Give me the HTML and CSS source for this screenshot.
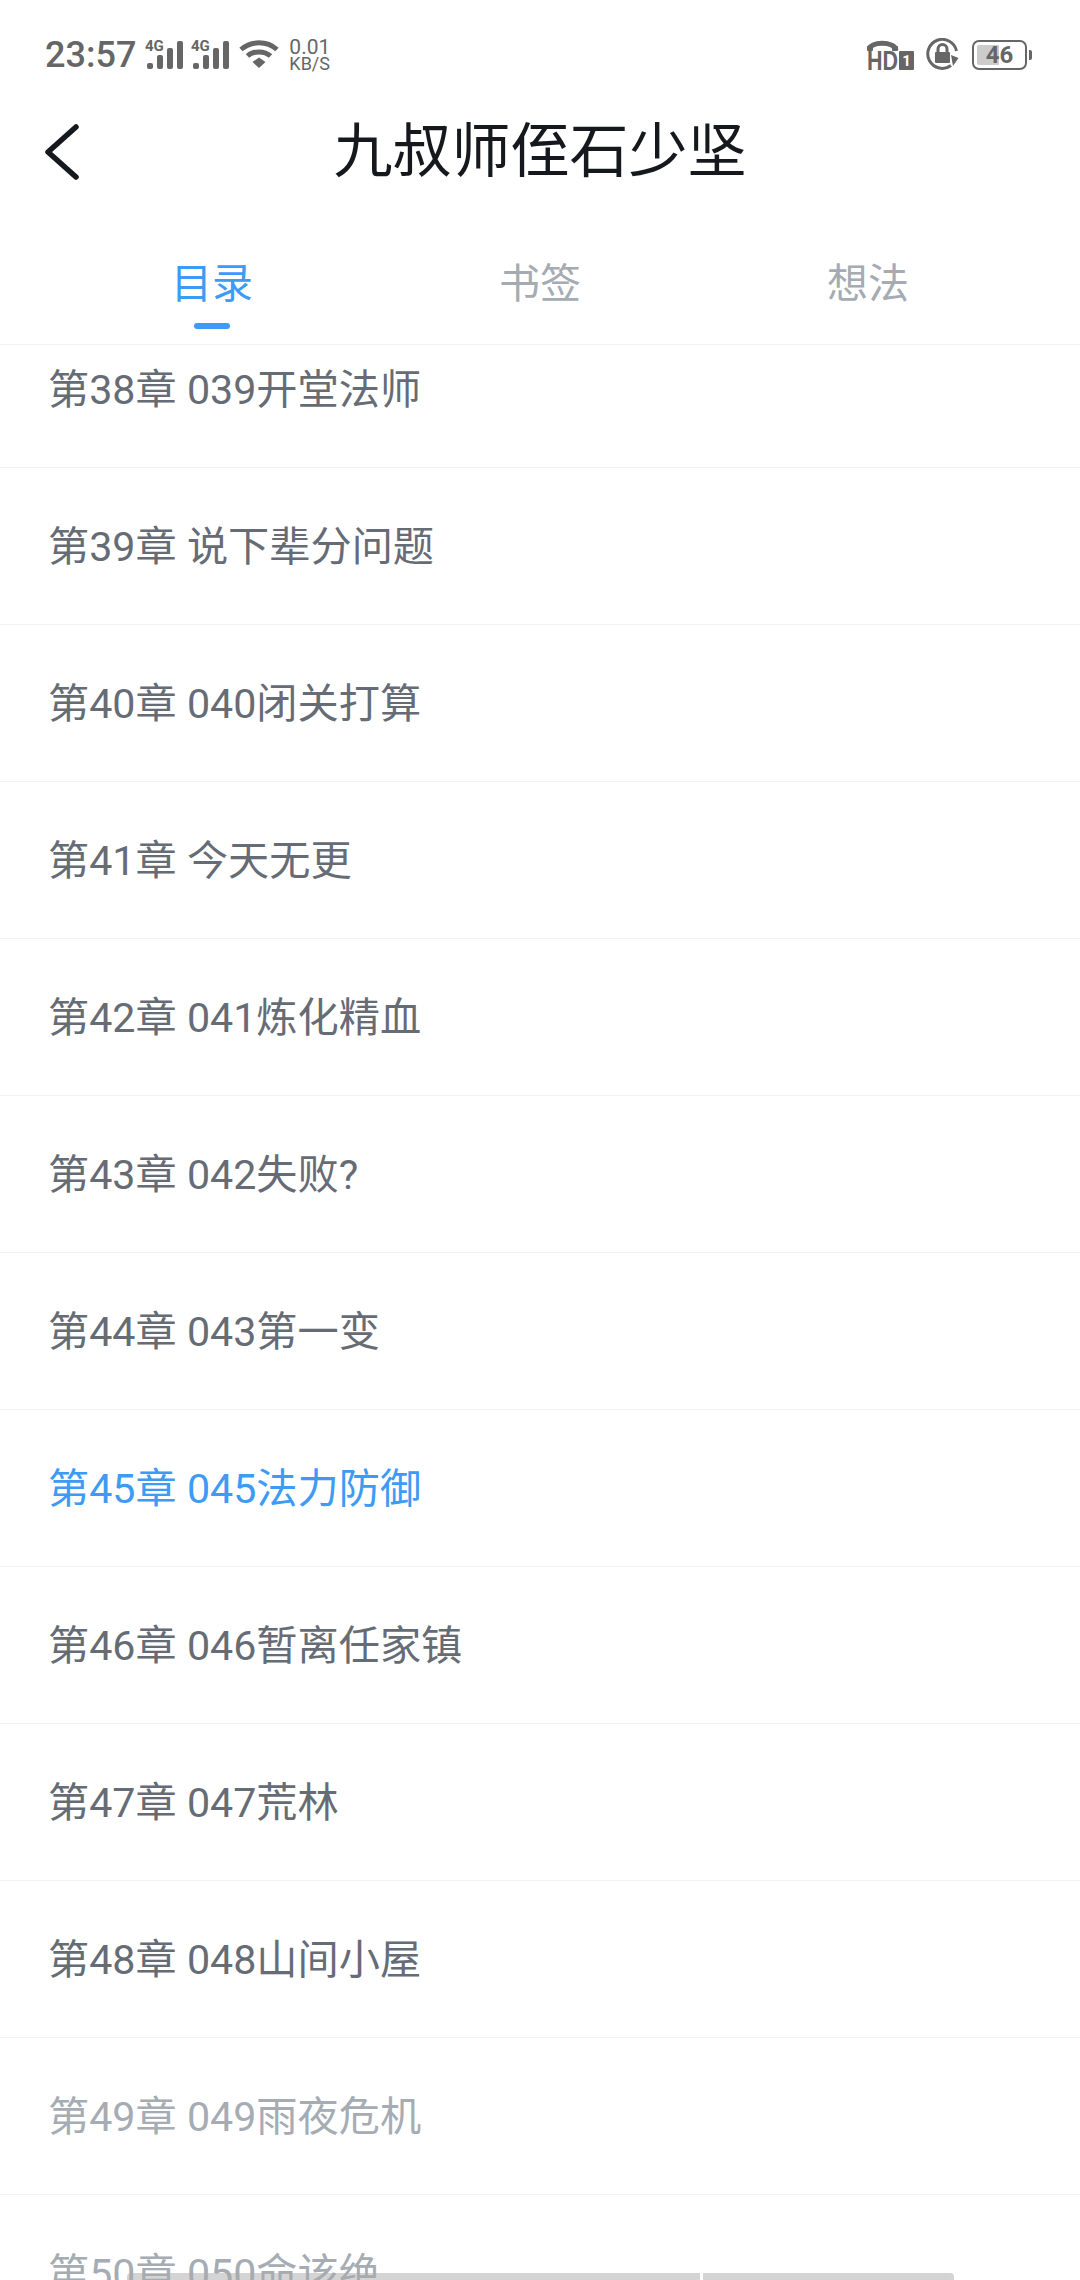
FILE: index.html
```html
<!DOCTYPE html>
<html>

<head>
    <meta charset="utf-8">
    <link rel="stylesheet" href="styles.css">
</head>

<body>
    <div class="page">
        <div class="statusbar">
            <div class="status-left">
                <span class="time">23:57</span>
                <svg class="signal" width="38" height="34" viewBox="0 -4 38 34">
                    <text class="signal-label" x="0" y="11">4G</text>
                    <rect x="2" y="23" width="6" height="6" rx="2" />
                    <rect x="12" y="15" width="6" height="14" rx="2" />
                    <rect x="22" y="8" width="6" height="21" rx="2" />
                    <rect x="32" y="1" width="6" height="28" rx="2" />
                </svg>
                <svg class="signal" width="38" height="34" viewBox="0 -4 38 34">
                    <text class="signal-label" x="0" y="11">4G</text>
                    <rect x="2" y="23" width="6" height="6" rx="2" />
                    <rect x="12" y="15" width="6" height="14" rx="2" />
                    <rect x="22" y="8" width="6" height="21" rx="2" />
                    <rect x="32" y="1" width="6" height="28" rx="2" />
                </svg>
                <svg class="wifi" width="40" height="30" viewBox="0 0 40 30">
                    <path d="M2 10.5 C12 1.5 28 1.5 38 10.5" />
                    <path d="M8.5 17 C14.5 11.5 25.5 11.5 31.5 17" />
                    <polygon class="wifi-dot" points="13.5,23 20,18.5 26.5,23 20,29" />
                </svg>
                <div class="speed">
                    <span class="speed-value">0.01</span>
                    <span class="speed-unit">KB/S</span>
                </div>
            </div>
            <div class="status-right">
                <svg class="hd" width="47" height="38" viewBox="0 0 47 38">
                    <path class="hd-phone" d="M2 11 C2 2 28 2 29 11" />
                    <rect x="0" y="7" width="6" height="5" rx="1" />
                    <rect x="25" y="7" width="6" height="5" rx="1" />
                    <text class="hd-label" x="0" y="31" textLength="31" lengthAdjust="spacingAndGlyphs">HD</text>
                    <rect x="32" y="12" width="15" height="19" rx="1" />
                    <text class="hd-sim" x="39.5" y="27">1</text>
                </svg>
                <svg class="rotate-lock" width="33" height="33" viewBox="0 0 33 33">
                    <path class="rotate-ring" d="M25 27.5 A14.5 14.5 0 1 1 30.5 13" />
                    <polygon points="25,17 32.5,20 27,28" />
                    <rect x="9" y="14" width="15" height="11" rx="1" />
                    <path class="rotate-ring thin" d="M12 14 V11 A4.5 4.5 0 0 1 21 11 V14" />
                </svg>
                <div class="battery">
                    <div class="battery-body">
                        <div class="battery-fill"></div>
                        <span class="battery-text">46</span>
                    </div>
                    <div class="battery-nub"></div>
                </div>
            </div>
        </div>

        <div class="navbar">
            <svg class="back" width="35" height="56" viewBox="0 0 35 56">
                <path d="M32 3 L4 28 L32 53" />
            </svg>
            <h1 class="title">九叔师侄石少坚</h1>
        </div>

        <div class="tabs">
            <div class="tab active">目录<span class="tab-line"></span></div>
            <div class="tab">书签</div>
            <div class="tab">想法</div>
        </div>

        <div class="chapters">
            <ul class="chapter-list">
                <li class="chapter">第38章 039开堂法师</li>
                <li class="chapter">第39章 说下辈分问题</li>
                <li class="chapter">第40章 040闭关打算</li>
                <li class="chapter">第41章 今天无更</li>
                <li class="chapter">第42章 041炼化精血</li>
                <li class="chapter">第43章 042失败?</li>
                <li class="chapter">第44章 043第一变</li>
                <li class="chapter current">第45章 045法力防御</li>
                <li class="chapter">第46章 046暂离任家镇</li>
                <li class="chapter">第47章 047荒林</li>
                <li class="chapter">第48章 048山间小屋</li>
                <li class="chapter locked">第49章 049雨夜危机</li>
                <li class="chapter locked">第50章 050命该绝</li>
            </ul>
        </div>

        <div class="gesture-bar">
            <div class="gesture-left"></div>
            <div class="gesture-right"></div>
        </div>
    </div>
</body>

</html>
```

FILE: styles.css
```css
* {
    margin: 0;
    padding: 0;
    box-sizing: border-box;
}

body {
    font-family: Roboto, "Noto Sans CJK SC", sans-serif;
    background: #fff;
}

.page {
    position: relative;
    width: 1080px;
    height: 2280px;
    overflow: hidden;
    display: flex;
    flex-direction: column;
}

/* status bar */
.statusbar {
    height: 72px;
    flex: none;
    padding: 0 48px 0 45px;
    display: flex;
    justify-content: space-between;
    align-items: flex-end;
    color: #666;
}

.status-left,
.status-right {
    display: flex;
    align-items: flex-end;
}

.time {
    font-size: 36px;
    font-weight: 500;
    line-height: 41px;
    margin: 0 9px -4px 0;
}

.signal {
    display: block;
    margin: 0 8px 2px 0;
    fill: #666;
}

.signal-label {
    font-family: Roboto, sans-serif;
    font-size: 15px;
    font-weight: 700;
}

.wifi {
    display: block;
    margin: 0 10px 3px 2px;
}

.wifi path {
    fill: none;
    stroke: #666;
    stroke-width: 5px;
}

.wifi-dot {
    fill: #666;
}

.speed {
    display: flex;
    flex-direction: column;
    font-size: 21px;
    line-height: 18px;
    width: 44px;
}

.speed-unit {
    font-size: 18px;
    line-height: 16px;
}

.status-right {
    gap: 12px;
}

.hd {
    display: block;
    margin-bottom: -5px;
    fill: #666;
}

.hd-phone {
    fill: none;
    stroke: #666;
    stroke-width: 5px;
}

.hd-label {
    font-family: "Liberation Sans", sans-serif;
    font-size: 28px;
    font-weight: 700;
}

.hd-sim {
    font-family: Roboto, sans-serif;
    font-size: 15px;
    font-weight: 700;
    fill: #fff;
    text-anchor: middle;
}

.rotate-lock {
    display: block;
    margin-bottom: 1px;
    fill: #666;
}

.rotate-ring {
    fill: none;
    stroke: #666;
    stroke-width: 3px;
}

.battery {
    display: flex;
    align-items: center;
    margin: 0 0 2px 1px;
}

.battery-body {
    position: relative;
    width: 55px;
    height: 30px;
    border: 2px solid #666;
    border-radius: 7px;
    display: flex;
    align-items: center;
    justify-content: center;
}

.battery-fill {
    position: absolute;
    left: 3px;
    top: 3px;
    bottom: 3px;
    width: 22px;
    background: #ccc;
    border-radius: 2px 0 0 2px;
}

.battery-text {
    position: relative;
    font-size: 24px;
    font-weight: 700;
    line-height: 26px;
    color: #666;
}

.battery-nub {
    width: 3px;
    height: 10px;
    margin-left: 2px;
    background: #666;
    border-radius: 0 2px 2px 0;
}

/* title */
.navbar {
    height: 160px;
    flex: none;
    padding-left: 44px;
    display: grid;
    grid-template-columns: 35px 1fr 79px;
    align-items: center;
}

.back {
    display: block;
    fill: none;
    stroke: #15191e;
    stroke-width: 5.5px;
    stroke-linecap: round;
    stroke-linejoin: round;
}

.title {
    font-size: 59px;
    font-weight: 400;
    line-height: 70px;
    color: #15191e;
    text-align: center;
}

/* tabs */
.tabs {
    height: 113px;
    flex: none;
    padding: 27px 48px 0;
    display: grid;
    grid-template-columns: repeat(3, 1fr);
    border-bottom: 1px solid #f0f1f2;
}

.tab {
    position: relative;
    font-size: 41px;
    line-height: 50px;
    text-align: center;
    color: #a5abb3;
}

.tab.active {
    color: #3d9bf5;
}

.tab-line {
    position: absolute;
    left: 50%;
    bottom: 15px;
    width: 36px;
    height: 6px;
    margin-left: -18px;
    background: #3d9bf5;
    border-radius: 3px;
}

/* chapters */
.chapters {
    flex: 1;
    overflow: hidden;
}

.chapter-list {
    list-style: none;
    margin-top: -34px;
}

.chapter {
    height: 157px;
    padding: 0 0 6px 48px;
    display: flex;
    align-items: center;
    font-size: 41.2px;
    color: #666c75;
    border-bottom: 1px solid #f2f3f4;
}

.chapter.current {
    color: #3d9bf5;
}

.chapter.locked {
    color: #a5acb4;
}

/* gesture bar over the list */
.gesture-bar {
    position: absolute;
    left: 127px;
    bottom: 0;
    width: 827px;
    height: 7px;
    display: flex;
    gap: 3px;
}

.gesture-left,
.gesture-right {
    background: rgba(170, 170, 170, 0.5);
}

.gesture-left {
    width: 573px;
    border-radius: 4px 0 0 0;
}

.gesture-right {
    flex: 1;
    border-radius: 0 4px 0 0;
}
```
